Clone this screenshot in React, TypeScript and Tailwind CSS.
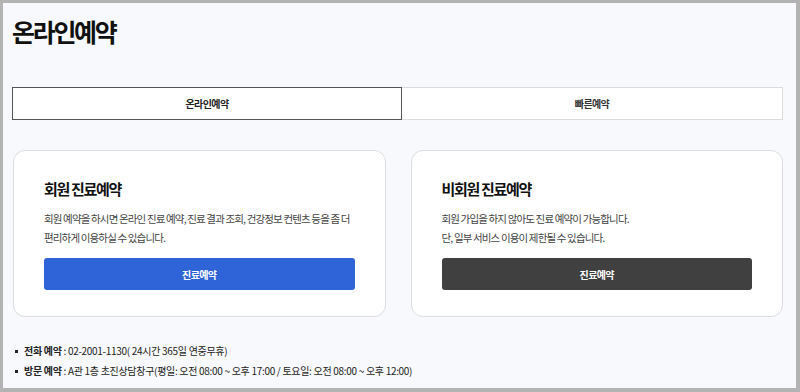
import React from 'react';

const font = { fontFamily: '"Noto Sans CJK KR", "Noto Sans", sans-serif' };

interface CardProps {
  title: string;
  lines: string[];
  buttonClass: string;
}

const ReserveCard: React.FC<CardProps> = ({ title, lines, buttonClass }) => (
  <div className="flex-1 rounded-[12px] border border-[#dcdde2] bg-white px-[30px] pt-[27px] pb-[26px]">
    <h2 className="text-[15px] font-bold leading-[22px] tracking-[-1.3px] text-[#111]">{title}</h2>
    <div className="mt-[9px] text-[10.5px] leading-[19px] tracking-[-0.85px] text-[#444]">
      {lines.map((l) => (
        <p key={l}>{l}</p>
      ))}
    </div>
    <button
      className={`mt-[11px] flex h-[32px] w-full items-center justify-center rounded-[3px] text-[10px] font-bold tracking-[-0.6px] text-white ${buttonClass}`}
    >
      진료예약
    </button>
  </div>
);

export default function App() {
  return (
    <div className="h-[392px] w-[800px] bg-[#b3b3b3] pt-[3px] pr-[4px] pb-[4px] pl-[3px]" style={font}>
      <div className="flex h-full flex-col bg-[#f8f9fc] pl-[9px] pr-[13px]">
        <h1 className="pt-[13px] text-[25px] font-bold leading-[31px] tracking-[-2.3px] text-[#111]">온라인예약</h1>

        <div className="mt-[40px] flex h-[33px]">
          <div className="flex w-[390px] items-center justify-center border-[1.5px] border-[#555] bg-white text-[10px] font-bold tracking-[-0.6px] text-[#222]">
            온라인예약
          </div>
          <div className="flex flex-1 items-center justify-center border border-l-0 border-[#dcdcdc] bg-white text-[10px] font-bold tracking-[-0.6px] text-[#333]">
            빠른예약
          </div>
        </div>

        <div className="mt-[30px] flex gap-[25px] pl-[1px]">
          <ReserveCard
            title="회원 진료예약"
            lines={[
              '회원 예약을 하시면 온라인 진료 예약, 진료 결과 조회, 건강정보 컨텐츠 등을 좀 더',
              '편리하게 이용하실 수 있습니다.',
            ]}
            buttonClass="bg-[#2f63d8]"
          />
          <ReserveCard
            title="비회원 진료예약"
            lines={['회원 가입을 하지 않아도 진료 예약이 가능합니다.', '단, 일부 서비스 이용이 제한될 수 있습니다.']}
            buttonClass="bg-[#404040]"
          />
        </div>

        <ul className="mt-[24px] flex flex-col pl-[3px] text-[10px] leading-[20px] tracking-[-0.3px] text-[#222]">
          <li className="flex items-center">
            <span className="mr-[6px] h-[3px] w-[3px] bg-[#222]" />
            <b className="font-bold">전화 예약</b>
            <span className="whitespace-pre"> : 02-2001-1130( 24시간 365일 연중무휴)</span>
          </li>
          <li className="flex items-center">
            <span className="mr-[6px] h-[3px] w-[3px] bg-[#222]" />
            <b className="font-bold">방문 예약</b>
            <span className="whitespace-pre"> : A관 1층 초진상담창구(평일: 오전 08:00 ~ 오후 17:00 / 토요일: 오전 08:00 ~ 오후 12:00)</span>
          </li>
        </ul>
      </div>
    </div>
  );
}
